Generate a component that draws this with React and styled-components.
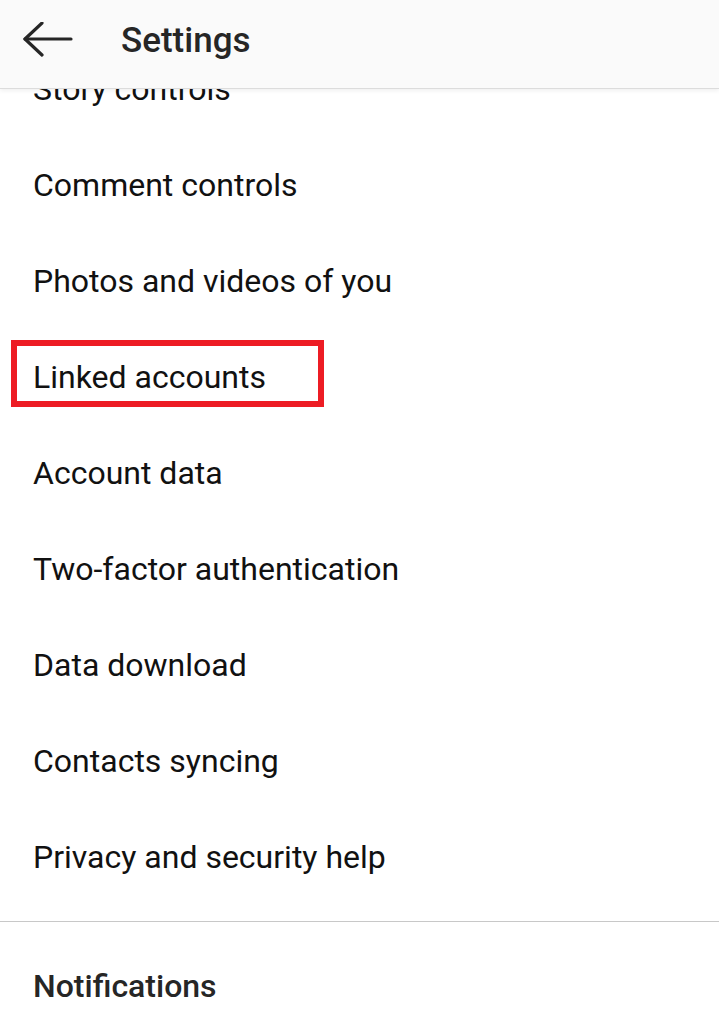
import React from 'react';
import styled, { createGlobalStyle } from 'styled-components';

const GlobalStyle = createGlobalStyle`
  html, body {
    margin: 0;
    padding: 0;
    background: #fff;
  }
  body {
    font-family: Roboto, "Liberation Sans", sans-serif;
  }
`;

const Screen = styled.div`
  position: relative;
  width: 719px;
  height: 1014px;
  overflow: hidden;
  background: #fff;
`;

const Header = styled.header`
  position: absolute;
  top: 0;
  left: 0;
  right: 0;
  z-index: 2;
  height: 89px;
  box-sizing: border-box;
  padding-bottom: 7px;
  display: flex;
  align-items: center;
  background: #fafafa;
  border-bottom: 1px solid #dcdcdc;
  box-shadow: 0 2px 4px rgba(0, 0, 0, 0.06);
  h1 {
    margin: 0 0 0 27px;
    font-size: 35px;
    font-weight: 500;
    color: #262626;
  }
`;

const BackButton = styled.div`
  width: 72px;
  height: 40px;
  display: flex;
  align-items: center;
  padding-left: 22px;
`;

const List = styled.div`
  padding-top: 41px;
`;

const Row = styled.div`
  position: relative;
  height: 96px;
  display: flex;
  align-items: center;
  padding-left: 33px;
  font-size: 32px;
  color: #111;
  ${({ highlighted }) => highlighted && `
    &::after {
      content: '';
      position: absolute;
      left: 11px;
      top: 11px;
      width: 301px;
      height: 55px;
      border: 6px solid #ed1c24;
    }
  `}
`;

const Divider = styled.hr`
  margin: 16px 0 0;
  border: 0;
  border-top: 1px solid #c8c8c8;
`;

const SectionTitle = styled.div`
  height: 128px;
  display: flex;
  align-items: center;
  padding-left: 33px;
  font-size: 32px;
  font-weight: 500;
  color: #262626;
`;

const items = [
  'Story controls',
  'Comment controls',
  'Photos and videos of you',
  'Linked accounts',
  'Account data',
  'Two-factor authentication',
  'Data download',
  'Contacts syncing',
  'Privacy and security help',
];

function App() {
  return (
    <Screen>
      <GlobalStyle />
      <Header>
        <BackButton>
          <svg width="51" height="38" viewBox="0 0 51 38" fill="none" stroke="#262626" strokeWidth="3.2" strokeLinecap="round" strokeLinejoin="round">
            <path d="M3 17H49" />
            <path d="M20 1L3 17L20 33" />
          </svg>
        </BackButton>
        <h1>Settings</h1>
      </Header>
      <List>
        {items.map((label) => (
          <Row key={label} highlighted={label === 'Linked accounts'}>{label}</Row>
        ))}
      </List>
      <Divider />
      <SectionTitle>Notifications</SectionTitle>
    </Screen>
  );
}

export default App;
